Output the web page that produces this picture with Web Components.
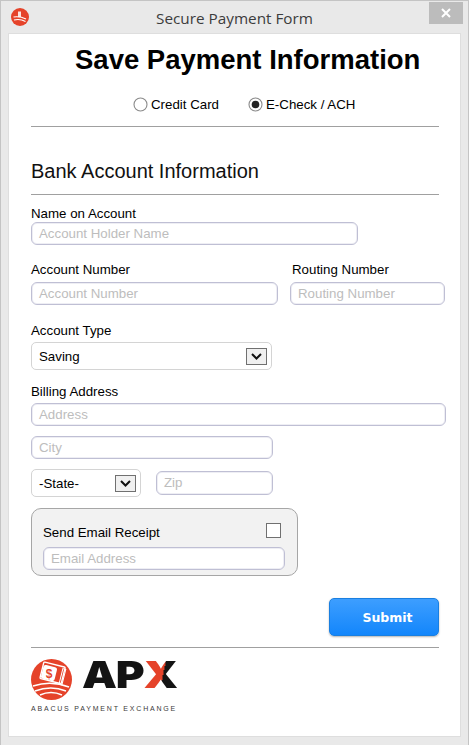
<!DOCTYPE html>
<html>
<head>
<meta charset="utf-8">
<title>Secure Payment Form</title>
<style>
  html, body { margin: 0; padding: 0; background: #e9e9e9; }
  body { font-family: "Liberation Sans", Arial, sans-serif; color: #000; }
</style>
</head>
<body>
<pay-window heading="Secure Payment Form">
  <page-title>Save Payment Information</page-title>
  <div style="display:flex; margin-top:20px; height:16px; padding-left:102px;">
    <radio-option label="Credit Card"></radio-option>
    <radio-option label="E-Check / ACH" checked style="margin-left:29px;"></radio-option>
  </div>
  <h-rule style="margin-top:14px;"></h-rule>
  <section-title style="margin-top:32px;">Bank Account Information</section-title>
  <h-rule style="margin-top:11px;"></h-rule>

  <form-label style="margin-top:10px;">Name on Account</form-label>
  <text-field placeholder="Account Holder Name" style="width:327px; margin-top:1px;"></text-field>

  <div style="display:flex; margin-top:16px;">
    <div style="flex:none; width:259px;">
      <form-label>Account Number</form-label>
      <text-field placeholder="Account Number" style="width:247px; margin-top:5px;"></text-field>
    </div>
    <div style="flex:none;">
      <form-label style="margin-left:2px;">Routing Number</form-label>
      <text-field placeholder="Routing Number" style="width:155px; margin-top:5px;"></text-field>
    </div>
  </div>

  <form-label style="margin-top:17px;">Account Type</form-label>
  <select-field value="Saving" style="width:241px; margin-top:4px;"></select-field>

  <form-label style="margin-top:13px;">Billing Address</form-label>
  <text-field placeholder="Address" style="width:415px; margin-top:4px;"></text-field>
  <text-field placeholder="City" style="width:242px; margin-top:10px;"></text-field>
  <div style="display:flex; align-items:center; gap:15px; margin-top:10px;">
    <select-field value="-State-" style="width:110px;"></select-field>
    <text-field placeholder="Zip" style="width:117px; height:24px;"></text-field>
  </div>

  <receipt-box style="margin-top:11px;"></receipt-box>

  <div style="display:flex; justify-content:flex-end; width:408px; margin-top:22px;">
    <submit-button>Submit</submit-button>
  </div>
  <h-rule style="margin-top:11px;"></h-rule>
  <apx-logo style="margin-top:11px;"></apx-logo>
</pay-window>

<script>
// tiny helper so each element only has to give its css + markup
function shadow(el, html) {
  el.attachShadow({ mode: 'open' });
  el.shadowRoot.innerHTML = html;
}

class PayWindow extends HTMLElement {
  connectedCallback() {
    shadow(this, `
      <style>
        :host {
          display: flex;
          flex-direction: column;
          box-sizing: border-box;
          width: 469px;
          height: 745px;
          background: #e9e9e9;
          border: 1px solid #c4c4c4;
          border-bottom: 0;
          padding: 0 7px 8px 7px;
          overflow: hidden;
        }
        .bar {
          flex: none;
          height: 32px;
          display: flex;
          position: relative;
          justify-content: center;
          align-items: center;
        }
        .title {
          font: 15.300px "Open Sans", "Noto Sans", sans-serif;
          color: #3c3c3c;
          margin-top: 2px;
        }
        .icon {
          position: absolute;
          left: 3px;
          top: 7px;
          width: 18px;
          height: 18px;
        }
        .close {
          position: absolute;
          right: -2px;
          top: 1px;
          width: 34px;
          height: 22px;
          background: #bcbcbc;
          display: flex;
          align-items: center;
          justify-content: center;
        }
        .panel {
          flex: 1;
          background: #fff;
          border: 1px solid #dedede;
          padding: 0 20px 0 22px;
        }
      </style>
      <div class="bar">
        <svg class="icon" viewBox="0 0 18 18">
          <circle cx="9" cy="9" r="9" fill="#e5432a"/>
          <path d="M7 3.500 L10 3.500 L10 9 L7 9 Z" fill="#fff" opacity=".85"/>
          <path d="M2.500 9 Q9 8 15 11 M3 12 Q9 10.500 14.500 13.500" fill="none" stroke="#fff" stroke-width="1.200"/>
        </svg>
        <span class="title">${this.getAttribute('heading')}</span>
        <div class="close">
          <svg width="10" height="10" viewBox="0 0 10 10">
            <path d="M1 1 L9 9 M9 1 L1 9" stroke="#fff" stroke-width="2"/>
          </svg>
        </div>
      </div>
      <div class="panel"><slot></slot></div>`);
  }
}

class PageTitle extends HTMLElement {
  connectedCallback() {
    shadow(this, `
      <style>
        :host {
          display: block;
          margin-top: 10px;
          height: 32px;
          line-height: 32px;
          font-size: 27.500px;
          font-weight: bold;
          padding-left: 44px;
          white-space: nowrap;
        }
      </style><slot></slot>`);
  }
}

class SectionTitle extends HTMLElement {
  connectedCallback() {
    shadow(this, `
      <style>
        :host { display: block; height: 24px; line-height: 24px; font-size: 20px; color: #111; }
      </style><slot></slot>`);
  }
}

class HRule extends HTMLElement {
  connectedCallback() {
    shadow(this, `
      <style>
        :host { display: block; height: 1px; background: #a0a0a0; width: 408px; }
      </style>`);
  }
}

class FormLabel extends HTMLElement {
  connectedCallback() {
    shadow(this, `
      <style>
        :host { display: block; height: 16px; line-height: 18px; font-size: 13.300px; white-space: nowrap; }
      </style><slot></slot>`);
  }
}

class RadioOption extends HTMLElement {
  connectedCallback() {
    const dot = this.hasAttribute('checked') ? '<circle cx="7.500" cy="7.500" r="3.800" fill="#222"/>' : '';
    shadow(this, `
      <style>
        :host { display: flex; align-items: center; gap: 3px; font-size: 13.300px; white-space: nowrap; }
        svg { width: 15px; height: 15px; flex: none; }
      </style>
      <svg viewBox="0 0 15 15">
        <circle cx="7.500" cy="7.500" r="6.500" fill="#fff" stroke="#8a8a8a" stroke-width="1.100"/>
        ${dot}
      </svg>
      <span>${this.getAttribute('label')}</span>`);
  }
}

class TextField extends HTMLElement {
  connectedCallback() {
    shadow(this, `
      <style>
        :host {
          display: block;
          box-sizing: border-box;
          height: 23px;
          background: #fff;
          border: 1px solid #bfbfd4;
          border-radius: 6px;
          box-shadow: inset 0 0 0 1px #eeeef4;
          padding-left: 7px;
          font-size: 13.300px;
          line-height: 22px;
          color: #bdbdbd;
          white-space: nowrap;
          overflow: hidden;
        }
      </style>
      <span>${this.getAttribute('placeholder')}</span>`);
  }
}

class SelectField extends HTMLElement {
  connectedCallback() {
    shadow(this, `
      <style>
        :host {
          display: flex;
          align-items: center;
          justify-content: space-between;
          box-sizing: border-box;
          height: 28px;
          background: #fff;
          border: 1px solid #d4d4d4;
          border-radius: 5px;
          padding: 0 4px 0 7px;
          font-size: 13.300px;
        }
        .arrow {
          box-sizing: border-box;
          width: 21px;
          height: 17px;
          background: #f0f0f0;
          border: 1px solid #707070;
          display: flex;
          align-items: center;
          justify-content: center;
        }
      </style>
      <span>${this.getAttribute('value')}</span>
      <div class="arrow">
        <svg width="11" height="7" viewBox="0 0 11 7">
          <path d="M1 1 L5.500 5.500 L10 1" fill="none" stroke="#111" stroke-width="2"/>
        </svg>
      </div>`);
  }
}

class ReceiptBox extends HTMLElement {
  connectedCallback() {
    shadow(this, `
      <style>
        :host {
          display: block;
          box-sizing: border-box;
          width: 267px;
          height: 68px;
          background: #f2f2f2;
          border: 1px solid #a6a6a6;
          border-radius: 10px;
          padding: 14px 12px 0 11px;
          font-size: 13.300px;
        }
        .row { display: flex; justify-content: space-between; height: 24px; }
        .row span { line-height: 16px; margin-top: 2px; }
        .check {
          box-sizing: border-box;
          width: 15px;
          height: 15px;
          margin-right: 4px;
          background: #fff;
          border: 1px solid #707070;
        }
        text-field { width: 242px; }
      </style>
      <div class="row"><span>Send Email Receipt</span><div class="check"></div></div>
      <text-field placeholder="Email Address"></text-field>`);
  }
}

class SubmitButton extends HTMLElement {
  connectedCallback() {
    shadow(this, `
      <style>
        :host {
          display: flex;
          align-items: center;
          justify-content: center;
          box-sizing: border-box;
          width: 110px;
          height: 38px;
          padding-left: 7px;
          border: 1px solid #1a7fe0;
          border-radius: 5px;
          background: linear-gradient(#3d9eff, #1386fb);
          box-shadow: 0 1px 2px rgba(0,0,0,.3);
          color: #fff;
          font: bold 12.500px "DejaVu Sans", sans-serif;
        }
      </style><slot></slot>`);
  }
}

class ApxLogo extends HTMLElement {
  connectedCallback() {
    shadow(this, `
      <style>
        :host { display: block; width: 150px; height: 54px; }
        .top { display: flex; height: 42px; }
        svg { width: 41px; height: 41px; flex: none; }
        .mark {
          margin: -3px 0 0 10px;
          font: 900 37px/38px Inter, "Liberation Sans", sans-serif;
          color: #141414;
          letter-spacing: -1px;
          transform: scaleX(1.190);
          transform-origin: left center;
          white-space: nowrap;
          height: 38px;
        }
        .x {
          background: linear-gradient(100deg, #e5432a 0 56%, #141414 56%);
          -webkit-background-clip: text;
          background-clip: text;
          color: transparent;
        }
        .sub {
          margin-top: 4px;
          font: 7px/8px "Liberation Sans", sans-serif;
          letter-spacing: 1.800px;
          color: #3a3a3a;
          white-space: nowrap;
        }
      </style>
      <div class="top">
        <svg viewBox="0 0 41 41">
          <circle cx="20.500" cy="20.500" r="20.500" fill="#e5432a"/>
          <g transform="rotate(14 20 16)">
            <rect x="10" y="5" width="22" height="17" rx="1" fill="none" stroke="#fff" stroke-width="1.400"/>
            <rect x="30" y="7" width="3" height="16" fill="none" stroke="#fff" stroke-width="1"/>
          </g>
          <rect x="11" y="7" width="14" height="14" rx="2.500" fill="#fff" transform="rotate(14 18 14)"/>
          <text x="18" y="18.500" font-family="Liberation Sans" font-weight="bold" font-size="12" fill="#e5432a" text-anchor="middle">$</text>
          <path d="M2 27 Q20 21 38 28 M4 32 Q20 26 35 32 M9 36 Q20 31 31 36" fill="none" stroke="#fff" stroke-width="1.500"/>
        </svg>
        <div class="mark">AP<span class="x">X</span></div>
      </div>
      <div class="sub">ABACUS PAYMENT EXCHANGE</div>`);
  }
}

customElements.define('pay-window', PayWindow);
customElements.define('page-title', PageTitle);
customElements.define('section-title', SectionTitle);
customElements.define('h-rule', HRule);
customElements.define('form-label', FormLabel);
customElements.define('radio-option', RadioOption);
customElements.define('text-field', TextField);
customElements.define('select-field', SelectField);
customElements.define('receipt-box', ReceiptBox);
customElements.define('submit-button', SubmitButton);
customElements.define('apx-logo', ApxLogo);
</script>
</body>
</html>
